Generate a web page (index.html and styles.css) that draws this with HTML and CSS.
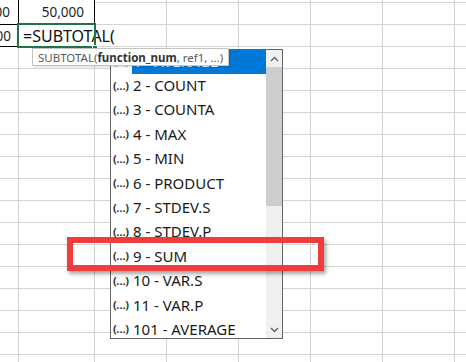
FILE: index.html
```html
<!DOCTYPE html>
<html lang="en">
<head>
    <meta charset="UTF-8">
    <meta name="viewport" content="width=device-width, initial-scale=1.0">
    <title>SUBTOTAL autocomplete</title>
    <link rel="stylesheet" href="styles.css">
</head>
<body>
    <div class="sheet">
        <!-- top two rows that hold content -->
        <div class="row row-first">
            <div class="cell cell-a boxed">00</div>
            <div class="cell cell-b boxed">50,000</div>
        </div>
        <div class="row row-second">
            <div class="cell cell-a boxed-bottom">00</div>
            <div class="cell cell-b active">=SUBTOTAL(</div>
        </div>

        <!-- formula hint -->
        <div class="hint">SUBTOTAL(<b>function_num</b>, ref1, ...)</div>

        <!-- autocomplete list -->
        <div class="dropdown">
            <ul class="items">
                <li class="item selected"><span class="ico">(…)</span><span class="label">1 - AVERAGE</span></li>
                <li class="item"><span class="ico">(…)</span><span class="label">2 - COUNT</span></li>
                <li class="item"><span class="ico">(…)</span><span class="label">3 - COUNTA</span></li>
                <li class="item"><span class="ico">(…)</span><span class="label">4 - MAX</span></li>
                <li class="item"><span class="ico">(…)</span><span class="label">5 - MIN</span></li>
                <li class="item"><span class="ico">(…)</span><span class="label">6 - PRODUCT</span></li>
                <li class="item"><span class="ico">(…)</span><span class="label">7 - STDEV.S</span></li>
                <li class="item"><span class="ico">(…)</span><span class="label">8 - STDEV.P</span></li>
                <li class="item"><span class="ico">(…)</span><span class="label">9 - SUM</span></li>
                <li class="item"><span class="ico">(…)</span><span class="label">10 - VAR.S</span></li>
                <li class="item"><span class="ico">(…)</span><span class="label">11 - VAR.P</span></li>
                <li class="item"><span class="ico">(…)</span><span class="label">101 - AVERAGE</span></li>
            </ul>
            <div class="scrollbar">
                <div class="sb-btn">
                    <svg width="9" height="6" viewBox="0 0 9 6"><path d="M1 5 L4.5 1.5 L8 5" fill="none" stroke="#606060" stroke-width="1.4"/></svg>
                </div>
                <div class="sb-thumb"></div>
                <div class="sb-track"></div>
                <div class="sb-btn">
                    <svg width="9" height="6" viewBox="0 0 9 6"><path d="M1 1 L4.5 4.5 L8 1" fill="none" stroke="#606060" stroke-width="1.4"/></svg>
                </div>
            </div>
        </div>

        <!-- annotation -->
        <div class="mark"></div>
    </div>
</body>
</html>
```

FILE: styles.css
```css
body, html {
    margin: 0;
    padding: 0;
}

body {
    width: 466px;
    height: 362px;
    overflow: hidden;
    background: #fff;
    font-family: 'Noto Sans', 'Open Sans', sans-serif;
    color: #1e1e1e;
}

/* grid lines of the worksheet */
.sheet {
    position: relative;
    height: 362px;
    background-image:
        linear-gradient(#d4d4d4, #d4d4d4),
        linear-gradient(#d4d4d4, #d4d4d4),
        linear-gradient(#d4d4d4, #d4d4d4),
        linear-gradient(#d4d4d4, #d4d4d4),
        linear-gradient(#d4d4d4, #d4d4d4),
        linear-gradient(#d4d4d4, #d4d4d4),
        linear-gradient(#d4d4d4, #d4d4d4),
        linear-gradient(to bottom, #d4d4d4 1px, transparent 1px);
    background-size:
        1px 100%, 1px 100%, 1px 100%, 1px 100%, 1px 100%, 1px 100%, 1px 100%,
        100% 22px;
    background-position:
        18px 0, 94px 0, 166px 0, 238px 0, 310px 0, 382px 0, 454px 0,
        0 2px;
    background-repeat: no-repeat, no-repeat, no-repeat, no-repeat, no-repeat, no-repeat, no-repeat, repeat-y;
}

.row {
    display: flex;
}

.row-first {
    height: 25px;
}

.row-second {
    height: 22px;
}

.cell {
    box-sizing: border-box;
    display: flex;
    align-items: center;
    justify-content: flex-end;
    white-space: nowrap;
    font-size: 13.5px;
}

.cell-a {
    width: 19px;
    padding-right: 8px;
    overflow: hidden;
}

.cell-b {
    width: 76px;
    padding-right: 10px;
}

.boxed {
    background: #fff;
    border-right: 1px solid #000;
    border-bottom: 1px solid #000;
}

.boxed-bottom {
    background: #fff;
    border-bottom: 1px solid #000;
}

.active {
    position: relative;
    justify-content: flex-start;
    padding: 0 0 1px 4px;
    font-size: 16px;
    color: #111;
}

.active::before {
    content: "";
    position: absolute;
    top: -2px;
    left: -2px;
    right: -1px;
    bottom: -1px;
    border: 2px solid #217346;
}

.active::after {
    content: "";
    position: absolute;
    right: -3px;
    bottom: -4px;
    width: 4px;
    height: 4px;
    background: #217346;
    border: 1px solid #fff;
}

.hint {
    position: absolute;
    z-index: 3;
    left: 32px;
    top: 48px;
    height: 18px;
    box-sizing: border-box;
    padding: 0 5px 0 5px;
    display: flex;
    align-items: center;
    background: #fff;
    border: 1px solid #c4c4c4;
    box-shadow: 1px 1px 2px rgba(0, 0, 0, 0.15);
    font-size: 11.5px;
    color: #5a5a5a;
    white-space: nowrap;
}

.hint b {
    color: #333;
}

.dropdown {
    position: absolute;
    z-index: 2;
    left: 110px;
    top: 49px;
    width: 173px;
    height: 290px;
    box-sizing: border-box;
    border: 1px solid #646464;
    background: #fff;
    display: flex;
    overflow: hidden;
}

.items {
    list-style: none;
    margin: 0;
    padding: 0;
    flex: 1;
}

.item {
    display: flex;
    height: 24.4px;
    align-items: center;
}

.ico {
    width: 21px;
    padding: 0 0 3px 2px;
    box-sizing: border-box;
    font-size: 11px;
    font-weight: bold;
    color: #333;
    letter-spacing: -0.5px;
}

.label {
    flex: 1;
    height: 100%;
    box-sizing: border-box;
    display: flex;
    align-items: center;
    padding: 0 0 3px 1px;
    font-size: 15px;
    color: #1a1a1a;
}

.selected .label {
    background: #0078d7;
    color: #fff;
}

.scrollbar {
    width: 16px;
    display: flex;
    flex-direction: column;
    background: #f0f0f0;
}

.sb-btn {
    height: 17px;
    display: flex;
    align-items: center;
    justify-content: center;
}

.sb-thumb {
    height: 139px;
    background: #cdcdcd;
}

.sb-track {
    flex: 1;
}

.mark {
    position: absolute;
    z-index: 4;
    left: 67px;
    top: 237px;
    width: 257px;
    height: 34px;
    box-sizing: border-box;
    border: 6px solid #ef3d3d;
    box-shadow: 2px 3px 4px rgba(0, 0, 0, 0.35);
}
```
